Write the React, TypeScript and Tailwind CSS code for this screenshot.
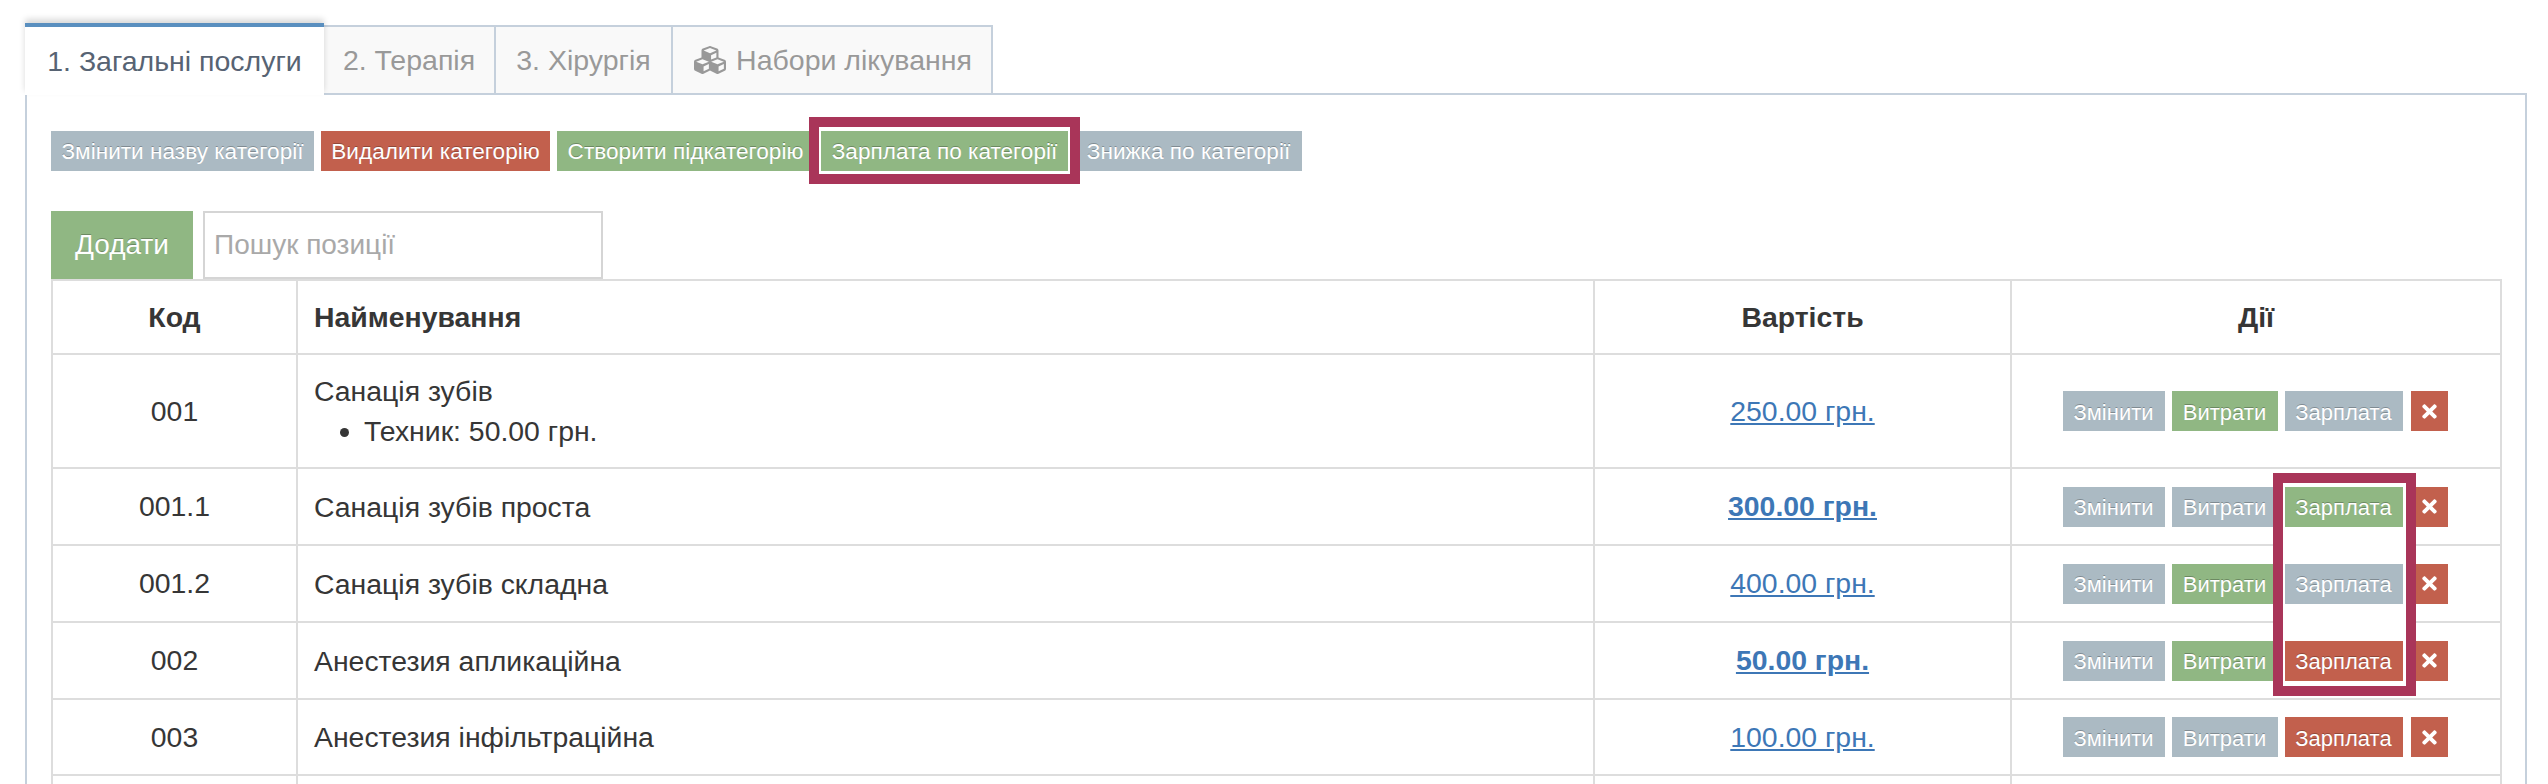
import { FaCubes, FaTimes } from 'react-icons/fa';

type Tone = 'grey' | 'green' | 'red';

const toneClass: Record<Tone, string> = {
  grey: 'bg-[#abbac3]',
  green: 'bg-[#90b783]',
  red: 'bg-[#c2604d]',
};

const rows: {
  code: string;
  name: string;
  sub?: string;
  price: string;
  bold?: boolean;
  cost: Tone;
  salary: Tone;
  height: string;
}[] = [
  { code: '001', name: 'Санація зубів', sub: 'Техник: 50.00 грн.', price: '250.00 грн.', cost: 'green', salary: 'grey', height: 'h-[114px]' },
  { code: '001.1', name: 'Санація зубів проста', price: '300.00 грн.', bold: true, cost: 'grey', salary: 'green', height: 'h-[77px]' },
  { code: '001.2', name: 'Санація зубів складна', price: '400.00 грн.', cost: 'green', salary: 'grey', height: 'h-[77px]' },
  { code: '002', name: 'Анестезия апликаційна', price: '50.00 грн.', bold: true, cost: 'green', salary: 'red', height: 'h-[77px]' },
  { code: '003', name: 'Анестезия інфільтраційна', price: '100.00 грн.', cost: 'grey', salary: 'red', height: 'h-[76px]' },
];

function Btn({
  tone,
  size,
  lifted,
  children,
}: {
  tone: Tone;
  size: string;
  lifted?: boolean;
  children: React.ReactNode;
}) {
  return (
    <span
      className={`${toneClass[tone]} ${size} ${lifted ? 'relative z-20' : ''} flex h-10 shrink-0 items-center justify-center pt-[2px] whitespace-nowrap text-white [text-shadow:0_-1px_0_rgba(0,0,0,0.25)]`}
    >
      {children}
    </span>
  );
}

export default function App() {
  return (
    <div className="relative h-[784px] w-[2548px] overflow-hidden bg-white font-['Liberation_Sans',sans-serif] text-[28px] text-[#363636]">
      {/* Tabs */}
      <div className="ml-[25px] flex h-[95px] items-end pt-[23px] text-[28.5px]">
        <div className="relative z-10 flex h-[72px] w-[299px] items-center justify-center border-t-4 border-[#5a8fbf] bg-white text-[#576373] shadow-[0_-4px_6px_0_rgba(0,0,0,0.15)]">
          1. Загальні послуги
        </div>
        <div className="flex h-[70px] w-[172px] items-center justify-center border-2 border-l-0 border-[#c5d0dc] bg-[#f9f9f9] text-[#999]">
          2. Терапія
        </div>
        <div className="flex h-[70px] w-[177px] items-center justify-center border-2 border-l-0 border-[#c5d0dc] bg-[#f9f9f9] text-[#999]">
          3. Хірургія
        </div>
        <div className="flex h-[70px] w-[320px] items-center justify-center gap-2 border-2 border-l-0 border-[#c5d0dc] bg-[#f9f9f9] text-[#999]">
          <FaCubes className="h-[32px] w-[36px]" />
          Набори лікування
        </div>
      </div>

      {/* Panel */}
      <div className="-mt-[2px] ml-[25px] h-[700px] w-[2502px] border-2 border-[#c5d0dc] px-6 pt-[36px]">
        <div className="flex gap-[7px]">
          <Btn tone="grey" size="w-[263px] text-[22.6px]">Змінити назву категорії</Btn>
          <Btn tone="red" size="w-[229px] text-[22.6px]">Видалити категорію</Btn>
          <Btn tone="green" size="w-[257px] text-[22.6px]">Створити підкатегорію</Btn>
          <Btn tone="green" size="w-[247px] text-[22.6px]" lifted>Зарплата по категорії</Btn>
          <Btn tone="grey" size="w-[227px] text-[22.6px]">Знижка по категорії</Btn>
        </div>

        <div className="mt-10 flex gap-[10px]">
          <div className="flex h-[68px] w-[142px] items-center justify-center bg-[#90b783] text-white [text-shadow:0_-1px_0_rgba(0,0,0,0.25)]">
            Додати
          </div>
          <input
            type="text"
            placeholder="Пошук позиції"
            className="h-[68px] w-[400px] border-2 border-[#d5d5d5] px-[9px] placeholder:text-[#a9a9a9]"
          />
        </div>

        <table className="w-[2449px] table-fixed border-collapse text-[28.4px]">
          <colgroup>
            <col className="w-[245px]" />
            <col className="w-[1297px]" />
            <col className="w-[417px]" />
            <col className="w-[490px]" />
          </colgroup>
          <thead>
            <tr className="h-[74px] font-bold">
              <th className="border-2 border-[#ddd]">Код</th>
              <th className="border-2 border-[#ddd] px-4 text-left">Найменування</th>
              <th className="border-2 border-[#ddd]">Вартість</th>
              <th className="border-2 border-[#ddd]">Дії</th>
            </tr>
          </thead>
          <tbody>
            {rows.map((row) => (
              <tr key={row.code} className={row.height}>
                <td className="border-2 border-[#ddd] text-center">{row.code}</td>
                <td className="border-2 border-[#ddd] px-4 leading-10">
                  {row.name}
                  {row.sub && (
                    <ul className="list-disc pl-[50px]">
                      <li>{row.sub}</li>
                    </ul>
                  )}
                </td>
                <td className="border-2 border-[#ddd] text-center">
                  <a className={`text-[#3d77b6] underline ${row.bold ? 'font-bold' : ''}`}>{row.price}</a>
                </td>
                <td className="border-2 border-[#ddd]">
                  <div className="flex items-center justify-center gap-[7px] pr-[2px]">
                    <Btn tone="grey" size="w-[102px] text-[22px]">Змінити</Btn>
                    <Btn tone={row.cost} size="w-[106px] text-[22px]">Витрати</Btn>
                    <Btn tone={row.salary} size="w-[118px] text-[22px]" lifted>Зарплата</Btn>
                    <Btn tone="red" size="ml-[1px] w-[37px]">
                      <FaTimes className="-mt-[2px] h-[21px] w-[21px]" />
                    </Btn>
                  </div>
                </td>
              </tr>
            ))}
            <tr className="h-[76px]">
              <td className="border-2 border-[#ddd]" />
              <td className="border-2 border-[#ddd]" />
              <td className="border-2 border-[#ddd]" />
              <td className="border-2 border-[#ddd]" />
            </tr>
          </tbody>
        </table>
      </div>

      {/* Red annotation frames */}
      <div className="absolute top-[117px] left-[809px] z-10 h-[67px] w-[271px] border-[10px] border-[#a93559] bg-white" />
      <div className="absolute top-[473px] left-[2273px] z-10 h-[223px] w-[143px] border-[10px] border-[#a93559] bg-white" />
    </div>
  );
}
